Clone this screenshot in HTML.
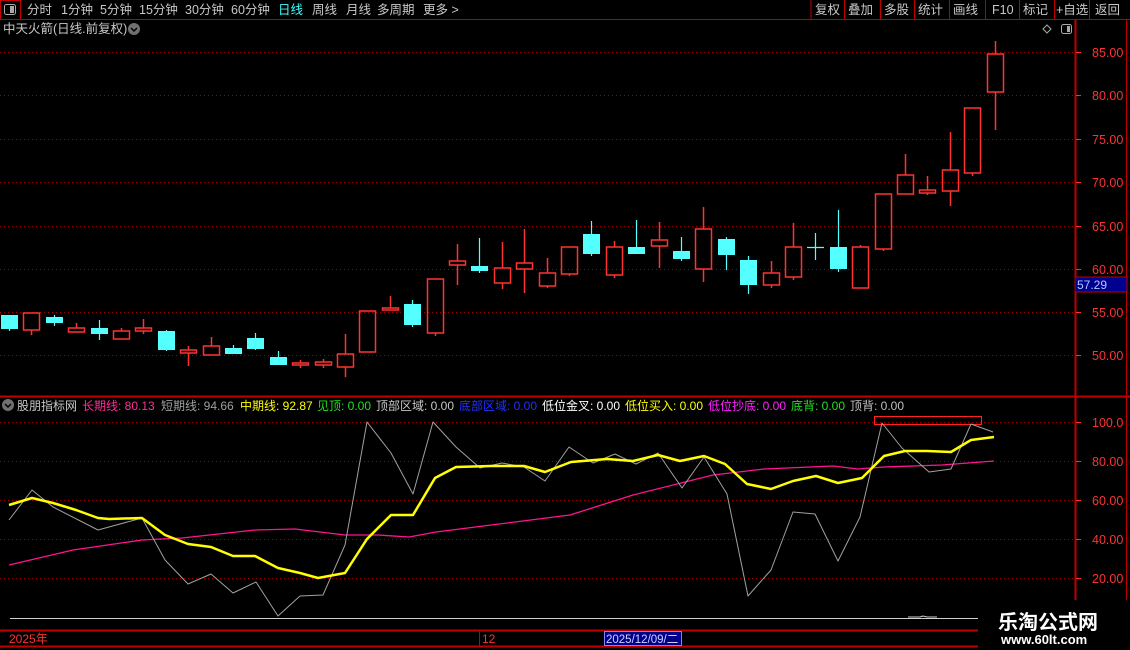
<!DOCTYPE html>
<html><head><meta charset="utf-8"><style>
html,body{margin:0;padding:0;background:#000;width:1130px;height:650px;overflow:hidden}
svg{display:block}
text{font-family:"Liberation Sans","Noto Sans CJK SC",sans-serif}
</style></head><body>
<svg id="s" width="1130" height="650" xmlns="http://www.w3.org/2000/svg" font-size="12">
<rect width="1130" height="650" fill="#000"/>
<!-- top bar -->
<line x1="0" y1="19.5" x2="1130" y2="19.5" stroke="#c00000"/>
<rect x="0.5" y="0.5" width="20" height="19" fill="none" stroke="#c00000"/>
<rect x="4.5" y="4.5" width="11" height="10" rx="2" fill="none" stroke="#aaa"/>
<rect x="10" y="6" width="4" height="7" fill="#aaa"/>
<g fill="#c8c8c8" font-size="12.5">
<text x="27" y="14">分时</text><text x="61" y="14">1分钟</text><text x="100" y="14">5分钟</text>
<text x="139" y="14">15分钟</text><text x="185" y="14">30分钟</text><text x="231" y="14">60分钟</text>
<text x="278" y="14" fill="#40ffff">日线</text><text x="312" y="14">周线</text><text x="346" y="14">月线</text>
<text x="377" y="14">多周期</text><text x="423" y="14">更多 &gt;</text>
</g>
<g stroke="#c00000"><line x1="811" y1="0" x2="811" y2="19"/><line x1="844.5" y1="0" x2="844.5" y2="19"/><line x1="880.5" y1="0" x2="880.5" y2="19"/><line x1="914.5" y1="0" x2="914.5" y2="19"/><line x1="949.5" y1="0" x2="949.5" y2="19"/><line x1="985.5" y1="0" x2="985.5" y2="19"/><line x1="1019.5" y1="0" x2="1019.5" y2="19"/><line x1="1054.5" y1="0" x2="1054.5" y2="19"/><line x1="1089.5" y1="0" x2="1089.5" y2="19"/></g>
<g fill="#c8c8c8" font-size="12.5">
<text x="815" y="14">复权</text><text x="848" y="14">叠加</text><text x="884" y="14">多股</text><text x="918" y="14">统计</text>
<text x="953" y="14">画线</text><text x="992" y="14">F10</text><text x="1023" y="14">标记</text><text x="1056" y="14">+自选</text><text x="1095" y="14">返回</text>
</g>
<!-- title row -->
<text x="3" y="33" fill="#c8c8c8" font-size="12.5">中天火箭(日线.前复权)</text>
<circle cx="134" cy="29" r="6" fill="#707070"/><path d="M131 28l3 3 3-3" stroke="#000" stroke-width="1.5" fill="none"/>
<path d="M1047 25l4 4-4 4-4-4z" fill="none" stroke="#aaa"/>
<rect x="1061.5" y="24.5" width="10" height="9" rx="2" fill="none" stroke="#aaa"/><rect x="1067" y="26" width="3" height="6" fill="#aaa"/>
<!-- axes -->
<line x1="1075.5" y1="20" x2="1075.5" y2="600" stroke="#c00000" stroke-width="2"/>
<line x1="1126.5" y1="20" x2="1126.5" y2="600" stroke="#c00000"/>
<line x1="0" y1="396.5" x2="1130" y2="396.5" stroke="#c00000" stroke-width="2"/>
<g id="grid" stroke="#a00000" stroke-dasharray="1,3"></g>
<g id="axl" fill="#ff3232" font-size="12.5"></g>
<rect x="1075" y="277" width="52" height="15" fill="#000090" stroke="#c00000"/>
<text x="1077" y="289" fill="#b0c8ff" font-size="12">57.29</text>
<g id="candles"></g>
<!-- indicator header -->
<circle cx="8" cy="405" r="6" fill="#707070"/><path d="M5 404l3 3 3-3" stroke="#000" stroke-width="1.5" fill="none"/>
<g font-size="12">
<text x="17" y="410" fill="#c8c8c8">股朋指标网</text>
<text x="82" y="410" fill="#ff2d9a">长期线: 80.13</text>
<text x="161" y="410" fill="#a0a0a0">短期线: 94.66</text>
<text x="240" y="410" fill="#ffff00">中期线: 92.87</text>
<text x="317" y="410" fill="#20e020">见顶: 0.00</text>
<text x="376" y="410" fill="#c8c8c8">顶部区域: 0.00</text>
<text x="459" y="410" fill="#2030ff">底部区域: 0.00</text>
<text x="542" y="410" fill="#ffffff">低位金叉: 0.00</text>
<text x="625" y="410" fill="#ffff00">低位买入: 0.00</text>
<text x="708" y="410" fill="#ff20ff">低位抄底: 0.00</text>
<text x="791" y="410" fill="#20e020">底背: 0.00</text>
<text x="850" y="410" fill="#c0c0c0">顶背: 0.00</text>
</g>
<rect x="874.5" y="416.5" width="107" height="8" fill="none" stroke="#ff2020"/>
<g id="ind"></g>
<line x1="10" y1="618.5" x2="978" y2="618.5" stroke="#d0d0d0"/>
<path d="M908 617h12l3-1 4 1h10" stroke="#d0d0d0" fill="none"/>
<!-- date bar -->
<line x1="0" y1="630.5" x2="978" y2="630.5" stroke="#c00000" stroke-width="2"/>
<line x1="0" y1="646.5" x2="978" y2="646.5" stroke="#c00000" stroke-width="2"/>
<line x1="479.5" y1="630" x2="479.5" y2="646" stroke="#c00000"/>
<text x="9" y="643" fill="#ff3232" font-size="12">2025年</text>
<text x="482" y="643" fill="#ff3232" font-size="12">12</text>
<rect x="604.5" y="631.5" width="77" height="14" fill="#00008b" stroke="#8080ff"/>
<text x="606" y="643" fill="#d0d0ff" font-size="11.5">2025/12/09/二</text>
<!-- watermark -->
<text x="998" y="629" fill="#fff" font-size="20" font-weight="bold" font-family="'Noto Serif CJK SC','Noto Sans CJK SC',serif">乐淘公式网</text>
<text x="1001" y="644" fill="#fff" font-size="13" font-weight="bold" font-family="'Liberation Serif',serif">www.60lt.com</text>
</svg>
<script>
var NS="http://www.w3.org/2000/svg";
function el(p,t,a){var e=document.createElementNS(NS,t);for(var k in a)e.setAttribute(k,a[k]);document.getElementById(p).appendChild(e);return e;}
// main grid
[52,95,139,182,226,269,312,355].forEach(function(y,i){
 el("grid","line",{x1:0,y1:y+.5,x2:1073,y2:y+.5});
 var t=el("axl","text",{x:1092,y:y+5});t.textContent=(85-5*i).toFixed(2);
 el("axl","rect",{x:1076,y:y,width:5,height:1});
});
[422,461,500,539,578].forEach(function(y,i){
 el("grid","line",{x1:0,y1:y+.5,x2:1073,y2:y+.5});
 var t=el("axl","text",{x:1092,y:y+5});t.textContent=i==0?"100.0":(80-20*(i-1)).toFixed(2);
 el("axl","rect",{x:1076,y:y,width:5,height:1});
});
var d=[["C",315,329,315,331],["R",313,330,313,335],["C",317,323,315,326],["R",328,332,323,332],["C",328,334,320,340],["R",331,339,328,339],["R",328,331,319,334],["C",331,350,330,351],["R",350,353,346,366],["R",346,355,337,355],["C",348,354,345,354],["C",338,349,333,350],["C",357,365,351,365],["R",363,365,360,368],["R",362,365,359,368],["R",354,367,334,377],["R",311,352,311,352],["R",308,310,296,310],["C",304,325,300,327],["R",279,333,279,336],["R",261,265,244,285],["C",266,271,238,273],["R",268,283,242,289],["R",263,269,229,293],["R",273,286,258,288],["R",247,274,247,276],["C",234,254,221,256],["R",247,275,241,278],["C",247,254,220,254],["R",240,246,222,268],["C",251,259,237,261],["R",229,269,207,282],["C",239,255,237,270],["C",260,285,256,294],["R",273,285,261,288],["R",247,277,223,280],["X",247,247,233,260],["C",247,269,210,272],["R",247,288,245,288],["R",194,249,194,251],["R",175,194,154,194],["R",190,193,176,195],["R",170,191,132,206],["R",108,173,108,176],["R",54,92,41,130]];
d.forEach(function(c,i){
 var x=Math.round(9+22.4*i);
 if(c[0]=="R"){
  el("candles","line",{x1:x+.5,y1:c[3],x2:x+.5,y2:c[1],stroke:"#ff3232","stroke-width":1.5});
  el("candles","line",{x1:x+.5,y1:c[2],x2:x+.5,y2:c[4],stroke:"#ff3232","stroke-width":1.5});
  el("candles","rect",{x:x-7.5,y:c[1],width:16,height:Math.max(c[2]-c[1],2),fill:"none",stroke:"#ff3232","stroke-width":1.5});
 } else if(c[0]=="C"){
  el("candles","line",{x1:x+.5,y1:c[3],x2:x+.5,y2:c[4],stroke:"#54ffff","stroke-width":1.2});
  el("candles","rect",{x:x-8,y:c[1],width:17,height:Math.max(c[2]-c[1],2),fill:"#54ffff"});
 } else {
  el("candles","line",{x1:x+.5,y1:c[3],x2:x+.5,y2:c[4],stroke:"#54ffff","stroke-width":1.2});
  el("candles","line",{x1:x-8,y1:c[1]+.5,x2:x+9,y2:c[1]+.5,stroke:"#54ffff","stroke-width":1.2});
 }
});
function pl(pts,col,w){el("ind","polyline",{points:pts,fill:"none",stroke:col,"stroke-width":w,"stroke-linejoin":"round"});}
pl("9,565 73,550 142,540 182,538 255,530 295,529 345,535 378,535 409,537 436,532 570,515 633,495 713,475 764,469 833,466 858,469 884,467 942,465 994,461","#ff1493",1.3);
pl("9,520 32,490 53,507 98,530 142,518 165,560 188,584 211,574 233,593 256,582 278,616 300,596 323,595 345,545 367,422 391,453 413,494 433,422 456,447 480,468 502,463 524,467 545,481 569,447 593,463 615,454 636,464 658,453 682,488 704,457 727,494 748,596 771,570 793,512 815,514 838,561 860,517 882,423 902,448 929,472 951,469 971,424 993,432","#a0a0a0",1);
pl("9,505 32,498 53,503 76,510 98,518 109,519 142,518 165,535 188,544 211,547 233,556 255,556 278,568 300,573 318,578 345,573 367,539 391,515 413,515 435,478 456,467 491,466 524,466 545,472 571,462 607,459 633,461 658,455 680,461 704,456 725,464 747,484 771,489 793,481 816,476 838,483 862,478 884,456 905,451 927,451 951,452 971,440 994,437","#ffff00",2.5);
</script>
</body></html>
